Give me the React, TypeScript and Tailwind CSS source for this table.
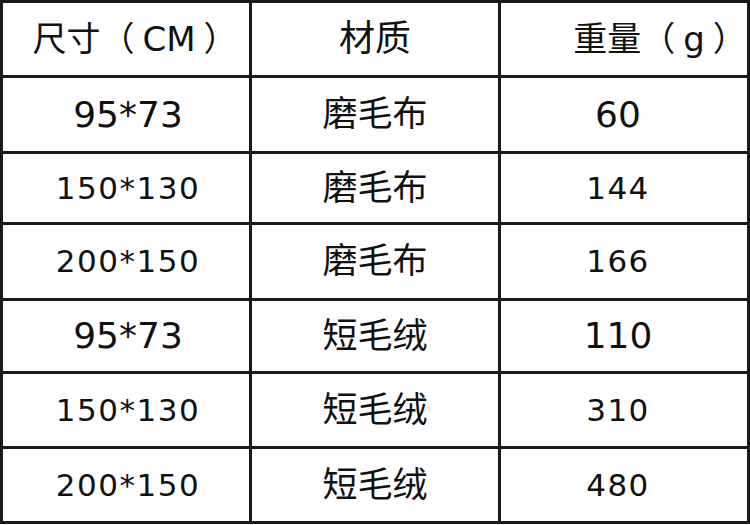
const rows: { size: string; big: boolean; mat: string; weight: string; wbig: boolean; h: string }[] = [
  { size: "95*73", big: true, mat: "磨毛布", weight: "60", wbig: true, h: "h-[73px]" },
  { size: "150*130", big: false, mat: "磨毛布", weight: "144", wbig: false, h: "h-[68px]" },
  { size: "200*150", big: false, mat: "磨毛布", weight: "166", wbig: false, h: "h-[73px]" },
  { size: "95*73", big: true, mat: "短毛绒", weight: "110", wbig: true, h: "h-[70px]" },
  { size: "150*130", big: false, mat: "短毛绒", weight: "310", wbig: false, h: "h-[72px]" },
  { size: "200*150", big: false, mat: "短毛绒", weight: "480", wbig: false, h: "h-[72px]" },
];

const font = "font-['DejaVu_Sans','Noto_Sans_CJK_SC',sans-serif]";

export default function App() {
  return (
    <div className={`w-[750px] h-[525px] bg-white ${font} text-[#111]`}>
      <div className="grid grid-cols-3 gap-[3px] p-[3px] bg-[#1a1a1a]">
        {/* header */}
        <div className="h-[72px] bg-white flex items-center justify-center pl-[18px] text-[34px]">
          尺寸（<span className="px-[8px]">CM</span>）
        </div>
        <div className="h-[72px] bg-white flex items-center justify-center text-[36px]">
          材质
        </div>
        <div className="h-[72px] bg-white flex items-center justify-center pl-[72px] text-[34px]">
          重量（<span className="px-[8px]">g</span>）
        </div>

        {rows.map((r, i) => (
          <Row key={i} {...r} />
        ))}
      </div>
    </div>
  );
}

function Row({
  size,
  big,
  mat,
  weight,
  wbig,
  h,
}: {
  size: string;
  big: boolean;
  mat: string;
  weight: string;
  wbig: boolean;
  h: string;
}) {
  return (
    <>
      <div
        className={`${h} bg-white flex items-center justify-center pl-[4px] ${big ? "text-[36px]" : "text-[31px] tracking-[1.5px]"}`}
      >
        {size}
      </div>
      <div className={`${h} bg-white flex items-center justify-center text-[35px]`}>
        {mat}
      </div>
      <div
        className={`${h} bg-white flex items-center justify-center pr-[12px] ${wbig ? "text-[36px]" : "text-[31px] tracking-[1.5px]"}`}
      >
        {weight}
      </div>
    </>
  );
}
